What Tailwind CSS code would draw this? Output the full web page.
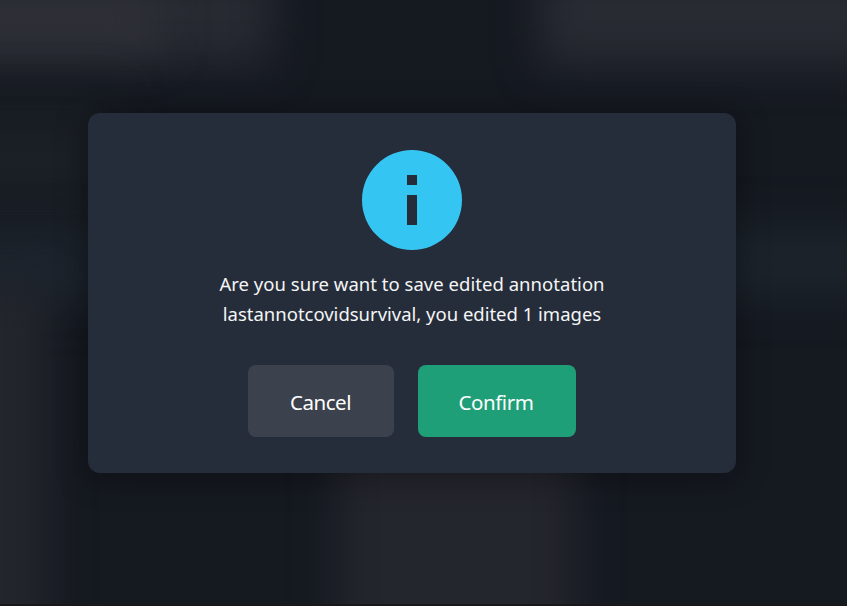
<!DOCTYPE html>
<html lang="en">
<head>
<meta charset="utf-8">
<title>Save annotation</title>
<script src="https://cdn.jsdelivr.net/npm/@tailwindcss/browser@4"></script>
</head>
<body class="relative h-[606px] w-[847px] overflow-hidden bg-[#151920] font-['Noto_Sans','Open_Sans',sans-serif]">
  <!-- blurred page content behind the dialog -->
  <div class="absolute inset-0 overflow-hidden" aria-hidden="true">
    <div class="absolute -left-20 -top-10 h-[104px] w-[352px] bg-[#272a31] blur-[22px]"></div>
    <div class="absolute -left-20 -top-2 h-[60px] w-[240px] bg-[#2e3037] blur-[22px]"></div>
    <div class="absolute left-[540px] -top-10 h-[106px] w-[400px] bg-[#282b32] blur-[22px]"></div>
    <div class="absolute -left-20 top-[90px] h-[200px] w-[200px] bg-[#181d23] blur-[20px]"></div>
    <div class="absolute -left-20 top-[140px] h-[40px] w-[170px] bg-[#1c2127] blur-[18px]"></div>
    <div class="absolute -left-20 top-[235px] h-[70px] w-[180px] bg-[#1d242e] blur-[22px]"></div>
    <div class="absolute -left-20 top-[285px] h-[400px] w-[128px] bg-[#23262c] blur-[22px]"></div>
    <div class="absolute left-[710px] top-[225px] h-[75px] w-[220px] bg-[#1c232b] blur-[20px]"></div>
    <div class="absolute left-[337px] top-[430px] h-[260px] w-[238px] bg-[#24262d] blur-[22px]"></div>
  </div>
  <main class="relative flex h-full pl-[88px] pt-[113px]">
    <section role="dialog" class="flex h-[360px] w-[648px] flex-col items-center rounded-xl bg-[#262d3a] pt-[37px] shadow-[0_4px_32px_rgba(0,0,0,0.35)]">
      <svg class="size-[100px] shrink-0" viewBox="0 0 100 100" fill="#35c5f3">
        <path fill-rule="evenodd" d="M50 0a50 50 0 1 0 0 100a50 50 0 0 0 0-100zM45 25h10v10H45zM45 45h10v30H45z"/>
      </svg>
      <p class="mt-[19px] flex flex-col items-center whitespace-nowrap text-[18.5px] leading-[30px] tracking-[0.03px] text-[#f4f5f6]">
        <span>Are you sure want to save edited annotation</span>
        <span class="tracking-[-0.01px]">lastannotcovidsurvival, you edited 1 images</span>
      </p>
      <div class="mt-9 flex gap-6 text-[20.5px] tracking-[-0.45px] text-white">
        <button class="h-[72px] w-[146px] rounded-lg bg-[#3c424d] pr-px pt-[3px]"><span>Cancel</span></button>
        <button class="h-[72px] w-[158px] rounded-lg bg-[#1f9f78] pr-[2px] pt-[3px]"><span>Confirm</span></button>
      </div>
    </section>
  </main>
  <div class="absolute inset-x-0 bottom-0 h-0.5 bg-[#19171c]"></div>
</body>
</html>
